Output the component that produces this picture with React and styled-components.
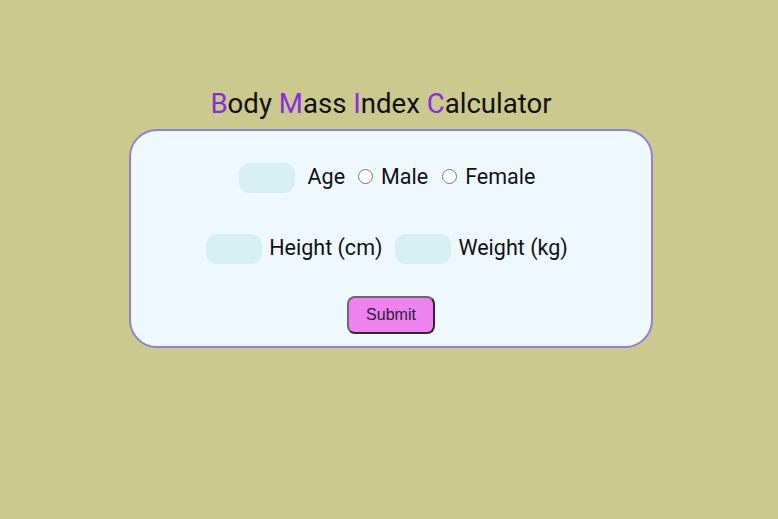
import React, { useState } from 'react'
import styled, { createGlobalStyle } from 'styled-components';

const GlobalStyle = createGlobalStyle`
  html, body {
    margin: 0;
    padding: 0;
    background-color: #cbc98e;
    font-family: Roboto, "Liberation Sans", sans-serif;
  }
`;

const Page = styled.main`
  display: flex;
  flex-direction: column;
  align-items: center;
  padding: 86px 0 0 4px;
`;

const Title = styled.h1`
  margin: 0 20px 7px 0;
  font-size: 27.6px;
  font-weight: 400;
  line-height: 36px;
  color: #111;

  span {
    color: #8a2be2;
  }
`;

const Card = styled.form`
  box-sizing: border-box;
  width: 524px;
  height: 219px;
  background-color: #f0f8ff;
  border: 2px solid #9180d4;
  border-radius: 28px;
  padding: 32px 8px 0 0;
  display: flex;
  flex-direction: column;
  align-items: center;
`;

const Row = styled.div`
  display: flex;
  align-items: center;
  justify-content: center;
  height: 30px;
  margin-bottom: ${({ $mb }) => $mb || 0}px;
  font-size: 21.5px;
  color: #111;
`;

const Field = styled.input`
  box-sizing: border-box;
  width: 56px;
  height: 30px;
  border: none;
  border-radius: 11px;
  background-color: #d6eff0;
  outline: none;
  margin-right: ${({ $mr }) => $mr || 7}px;
`;

const Label = styled.label`
  display: flex;
  align-items: center;
  padding-bottom: 4px;
  margin-right: ${({ $mr }) => $mr || 0}px;
`;

const Radio = styled.input`
  width: 15px;
  height: 15px;
  margin: 0 8px 0 0;
`;

const SubmitButton = styled.button`
  width: 88px;
  height: 38px;
  margin-left: 8px;
  background-color: #ee82ee;
  border: 2px solid #3a3a3a;
  border-color: #6a6a6a #2a2a2a #2a2a2a #6a6a6a;
  border-radius: 8px;
  font-family: "Liberation Sans", Arial, sans-serif;
  font-size: 16px;
  color: #2e1a3a;
  cursor: pointer;
`;

const Letter = ({ children }) => <span>{children}</span>;

const App = () => {
  const [gender, setGender] = useState('');

  return (
    <Page>
      <GlobalStyle />
      <Title>
        <Letter>B</Letter>ody <Letter>M</Letter>ass <Letter>I</Letter>ndex <Letter>C</Letter>alculator
      </Title>
      <Card onSubmit={(e) => e.preventDefault()}>
        <Row $mb={41}>
          <Field type="text" $mr={13} />
          <Label $mr={13}>Age</Label>
          <Label $mr={14}>
            <Radio type="radio" name="g" checked={gender === 'm'} onChange={() => setGender('m')} />
            Male
          </Label>
          <Label>
            <Radio type="radio" name="g" checked={gender === 'f'} onChange={() => setGender('f')} />
            Female
          </Label>
        </Row>
        <Row $mb={32}>
          <Field type="text" />
          <Label $mr={13}>Height (cm)</Label>
          <Field type="text" />
          <Label>Weight (kg)</Label>
        </Row>
        <SubmitButton type="submit">Submit</SubmitButton>
      </Card>
    </Page>
  )
}

export default App;
